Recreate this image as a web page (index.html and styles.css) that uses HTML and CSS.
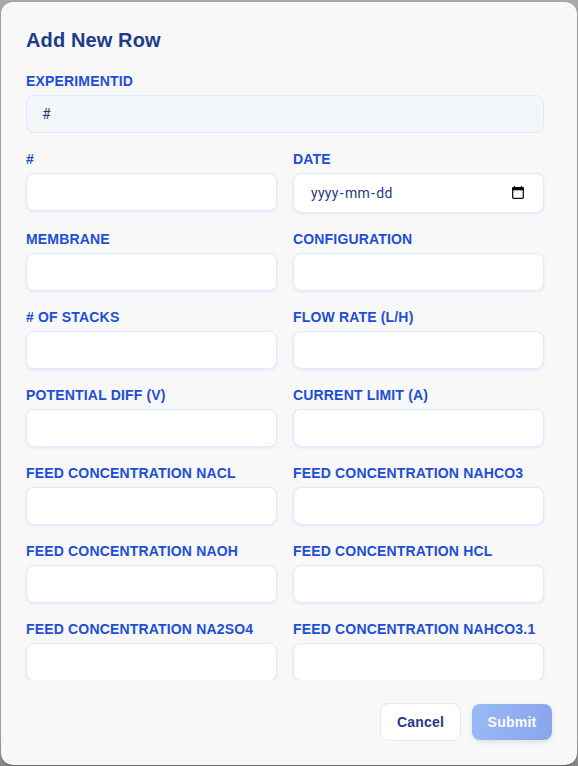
FILE: index.html
```html
<!DOCTYPE html>
<html lang="en">
<head>
<meta charset="utf-8">
<title>Add New Row</title>
<link rel="stylesheet" href="styles.css">
</head>
<body>
<div class="modal">
  <h2 class="title">Add New Row</h2>
  <form class="fields">
    <div class="field wide"><span class="label">EXPERIMENTID</span><div class="input readonly"><span class="value">#</span></div></div>
    <div class="field"><span class="label">#</span><div class="input"></div></div>
    <div class="field"><span class="label">DATE</span><div class="input date"><span class="value date-text">yyyy<span class="dash">-</span>mm<span class="dash">-</span>dd</span>
      <svg class="calendar" width="12" height="14" viewBox="0 0 12 14"><path d="M2.5 0v2M9.5 0v2" stroke="#000" stroke-width="1.2"/><rect x=".7" y="1.7" width="10.6" height="10.6" rx=".8" fill="none" stroke="#111" stroke-width="1.3"/><path d="M.5 1.3h11v3H.5z"/></svg></div></div>
    <div class="field"><span class="label">MEMBRANE</span><div class="input"></div></div>
    <div class="field"><span class="label">CONFIGURATION</span><div class="input"></div></div>
    <div class="field"><span class="label"># OF STACKS</span><div class="input"></div></div>
    <div class="field"><span class="label">FLOW RATE (L/H)</span><div class="input"></div></div>
    <div class="field"><span class="label">POTENTIAL DIFF (V)</span><div class="input"></div></div>
    <div class="field"><span class="label">CURRENT LIMIT (A)</span><div class="input"></div></div>
    <div class="field"><span class="label">FEED CONCENTRATION NACL</span><div class="input"></div></div>
    <div class="field"><span class="label">FEED CONCENTRATION NAHCO3</span><div class="input"></div></div>
    <div class="field"><span class="label">FEED CONCENTRATION NAOH</span><div class="input"></div></div>
    <div class="field"><span class="label">FEED CONCENTRATION HCL</span><div class="input"></div></div>
    <div class="field"><span class="label">FEED CONCENTRATION NA2SO4</span><div class="input"></div></div>
    <div class="field"><span class="label">FEED CONCENTRATION NAHCO3.1</span><div class="input"></div></div>
  </form>
  <div class="actions">
    <button class="btn cancel" type="button">Cancel</button>
    <button class="btn submit" type="button">Submit</button>
  </div>
</div>
</body>
</html>
```
FILE: styles.css
```css
* { box-sizing: border-box; }
body {
  margin: 0;
  height: 766px;
  padding: 2px 1px 1px;
  overflow: hidden;
  background: linear-gradient(#a9a9a9, #a9a9a9 740px, #858585);
  font-family: "Liberation Sans", Arial, sans-serif;
}
.modal {
  height: 763px;
  padding: 26px 25px 24px;
  border-radius: 12px;
  background: #f8f8f8;
  box-shadow: 0 1px 2px rgba(0, 0, 0, .3);
}
.title {
  margin: 0 0 21px;
  color: #1e3a8a;
  font-size: 20px;
  line-height: 24px;
  font-weight: 700;
  letter-spacing: .12px;
}
.fields {
  display: grid;
  grid-template-columns: 1fr 1fr;
  grid-auto-rows: max-content;
  align-content: start;
  gap: 18px 16px;
  height: 607px;
  margin: 0 4px 0 -4px;
  padding: 0 4px;
  overflow: hidden;
}
.field { display: flex; flex-direction: column; gap: 6px; white-space: nowrap; }
.wide { grid-column: 1 / -1; }
.label {
  color: #1d4ed8;
  font-size: 14px;
  line-height: 16px;
  font-weight: 700;
  letter-spacing: .17px;
}
.input {
  display: flex;
  align-items: center;
  justify-content: space-between;
  flex: none;
  height: 38px;
  padding: 0 19px 0 16px;
  border: 1px solid #dbeafe;
  border-radius: 8px;
  background: #fff;
  box-shadow: 0 1px 3px rgba(37, 99, 235, .1);
}
.readonly { padding-left: 15px; background: #f3f7fa; box-shadow: none; }
.date { height: 40px; padding-left: 17px; }
.value { color: #1e3a8a; font: 14px Roboto, sans-serif; }
.date-text { letter-spacing: .3px; }
.dash { margin: 0 1px; }
.actions { display: flex; justify-content: flex-end; align-items: center; gap: 11px; margin-top: 23px; }
.btn {
  padding: 0;
  border: 0;
  border-radius: 8px;
  font: 700 14px "Liberation Sans", Arial, sans-serif;
  letter-spacing: .22px;
}
.cancel { width: 81px; height: 38px; border: 1px solid #dbeafe; border-radius: 9px; background: #fff; color: #1e3a8a; }
.submit { width: 80px; height: 36px; background: linear-gradient(100deg, #98b9f6, #8aa5eb); color: #fbfcff; box-shadow: 0 2px 5px rgba(60, 70, 100, .14); }
```
